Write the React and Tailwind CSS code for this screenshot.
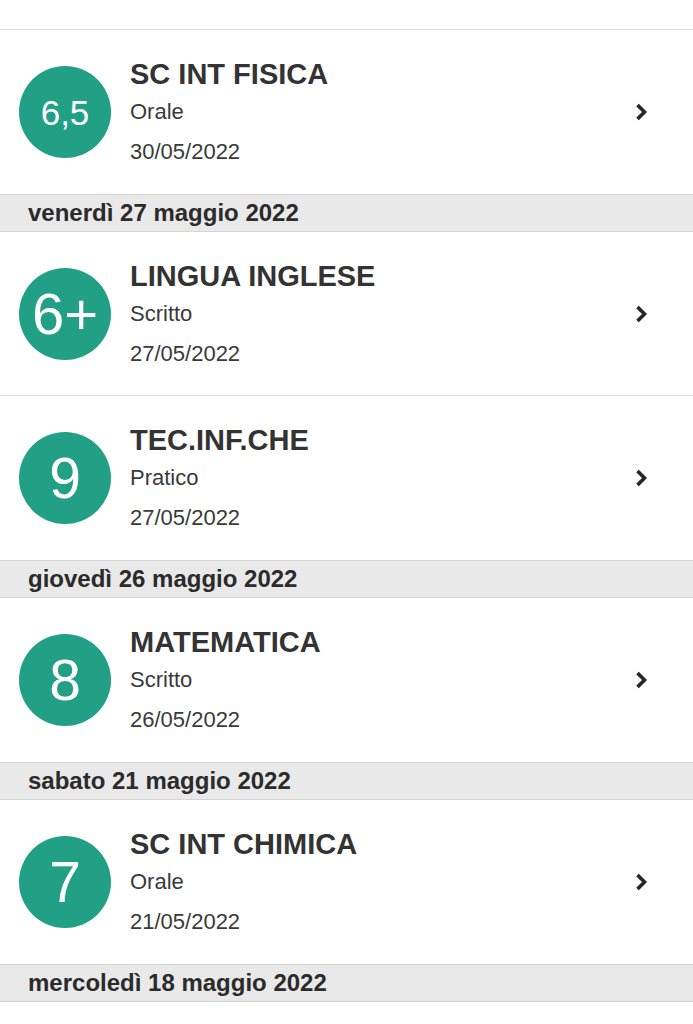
const grades = [
  { type: "row", value: "6,5", size: "text-[35px]", subject: "SC INT FISICA", kind: "Orale", date: "30/05/2022" },
  { type: "day", label: "venerdì 27 maggio 2022" },
  { type: "row", value: "6+", size: "text-[58px]", subject: "LINGUA INGLESE", kind: "Scritto", date: "27/05/2022" },
  { type: "row", value: "9", size: "text-[57px]", subject: "TEC.INF.CHE", kind: "Pratico", date: "27/05/2022" },
  { type: "day", label: "giovedì 26 maggio 2022" },
  { type: "row", value: "8", size: "text-[57px]", subject: "MATEMATICA", kind: "Scritto", date: "26/05/2022" },
  { type: "day", label: "sabato 21 maggio 2022" },
  { type: "row", value: "7", size: "text-[57px]", subject: "SC INT CHIMICA", kind: "Orale", date: "21/05/2022" },
  { type: "day", label: "mercoledì 18 maggio 2022" },
];

function Chevron() {
  return (
    <svg width="14" height="20" viewBox="0 0 14 20" fill="none">
      <path d="M3.5 3 L10.5 10 L3.5 17" stroke="#262626" strokeWidth="3.6" strokeLinejoin="miter" />
    </svg>
  );
}

function GradeRow({ item, last }) {
  return (
    <div className={`flex h-[164px] items-center pl-[19px] pr-[45px] bg-white ${last ? "" : "border-b border-[#dcdcdc]"}`}>
      <div className="flex h-[92px] w-[92px] shrink-0 items-center justify-center rounded-full bg-[#21a086]">
        <span className={`${item.size} font-light leading-none text-white`}>{item.value}</span>
      </div>
      <div className="ml-[19px] flex flex-1 flex-col pt-1">
        <div className="text-[29px] font-bold leading-[36px] text-[#333]">{item.subject}</div>
        <div className="text-[22px] leading-[40px] text-[#3a3a3a]">{item.kind}</div>
        <div className="text-[22px] leading-[40px] text-[#3a3a3a]">{item.date}</div>
      </div>
      <Chevron />
    </div>
  );
}

function DayHeader({ label }) {
  return (
    <div className="flex h-[38px] items-center border-y border-[#d4d4d4] bg-[#e9e9e9] pl-[28px]">
      <span className="text-[24px] font-bold leading-none text-[#2b2b2b]">{label}</span>
    </div>
  );
}

export default function App() {
  return (
    <div className="min-h-[1024px] w-full bg-white" style={{ fontFamily: '"Liberation Sans", Arial, sans-serif' }}>
      <div className="h-[30px] border-b border-[#dcdcdc]" />
      {grades.map((item, i) => {
        if (item.type === "day") return <DayHeader key={i} label={item.label} />;
        const next = grades[i + 1];
        return <GradeRow key={i} item={item} last={!next || next.type === "day"} />;
      })}
    </div>
  );
}
